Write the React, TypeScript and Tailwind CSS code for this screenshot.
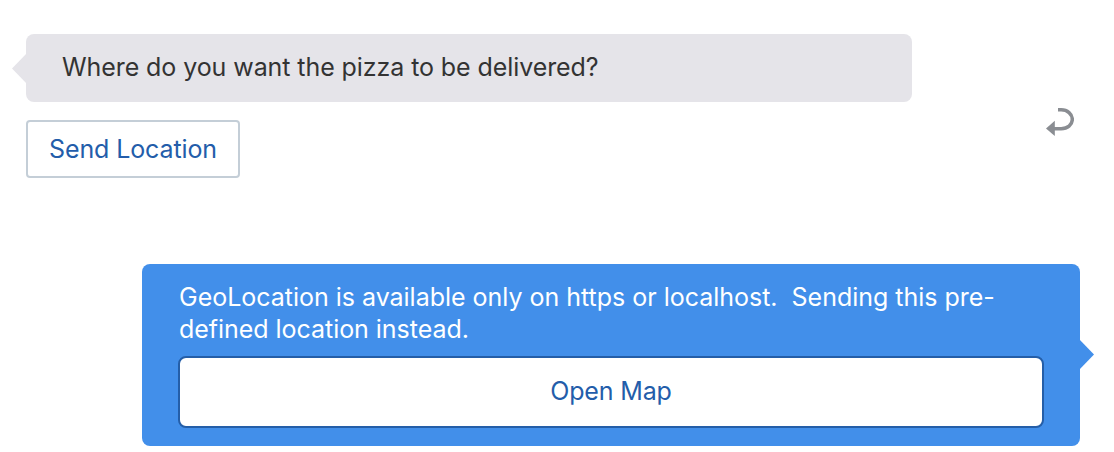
function ReplyIcon() {
  return (
    <svg width="28" height="28" viewBox="0 0 28 28" fill="none" aria-hidden="true">
      <path d="M12 1.8H15.2C21.4 1.8 26.3 6 26.3 11.4C26.3 17 21.4 20.7 15.2 20.7H8" stroke="#8a8d92" strokeWidth="3.5" />
      <path d="M0 20.4L8.8 12.7V28Z" fill="#8a8d92" />
    </svg>
  );
}

export default function App() {
  return (
    <main className="flex h-[452px] w-[1114px] flex-col overflow-hidden bg-white font-['Inter','Liberation_Sans',sans-serif] text-[25px] leading-8 font-normal">
      <section className="flex justify-between pt-[34px] pr-10 pl-[26px]">
        <div className="flex flex-col items-start gap-[18px]">
          <div className="relative flex h-[68px] w-[886px] items-center rounded-lg bg-[#e5e4e9] pb-[3px] pl-9 text-[#333333]">
            <svg className="absolute top-[19px] -left-[15px]" width="16" height="31" viewBox="0 0 16 31" aria-hidden="true">
              <path d="M16 0L1 15.5L16 31Z" fill="#e5e4e9" />
            </svg>
            <p className="tracking-[-0.08px] whitespace-nowrap">Where do you want the pizza to be delivered?</p>
          </div>
          <button className="flex h-[58px] w-[214px] items-center justify-center rounded-[4px] border-2 border-[#c4ced7] bg-white text-[#235daa]">
            <span className="tracking-[-0.12px] whitespace-nowrap">Send Location</span>
          </button>
        </div>
        <button className="mt-[74px] size-7" aria-label="Reply">
          <ReplyIcon />
        </button>
      </section>
      <section className="mt-[86px] ml-[142px] flex">
        <div className="relative flex h-[182px] w-[938px] flex-col rounded-lg bg-[#428fea] px-9 pt-[17px] text-white">
          <svg className="absolute top-[75px] -right-[15px]" width="16" height="31" viewBox="0 0 16 31" aria-hidden="true">
            <path d="M0 0L15 15.5L0 31Z" fill="#428fea" />
          </svg>
          <p className="pl-px tracking-[-0.015px] whitespace-pre">GeoLocation is available only on https or localhost.  Sending this pre-</p>
          <p className="pl-px tracking-[-0.04px] whitespace-nowrap">defined location instead.</p>
          <button className="mt-[11px] flex h-[72px] items-center justify-center rounded-lg border-2 border-[#245ea8] bg-white pb-0.5 text-[#235daa]">
            <span className="tracking-[-0.15px] whitespace-nowrap">Open Map</span>
          </button>
        </div>
      </section>
    </main>
  );
}
